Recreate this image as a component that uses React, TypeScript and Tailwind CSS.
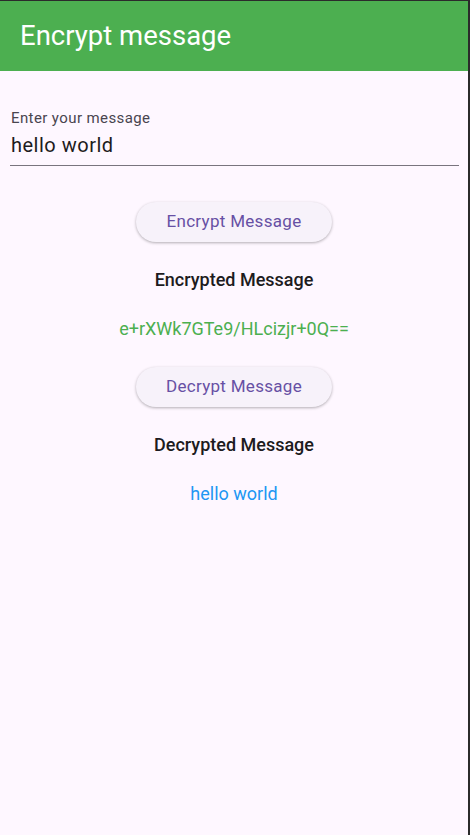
import React from "react";

export default function App() {
  return (
    <div className="w-[470px] h-[835px] bg-[#fef7ff] border-t border-r-2 border-[#2b2b2b] flex flex-col" style={{ fontFamily: "Roboto, 'Noto Sans', sans-serif" }}>
      <div className="h-[70px] bg-[#4caf50] flex items-center pl-[20px] shrink-0">
        <span className="text-white text-[27.5px] leading-none">Encrypt message</span>
      </div>
      <div className="pl-[10px] pr-[9px] pt-[38px] flex flex-col">
        <div className="flex flex-col border-b border-[#79747e] pb-[7px]">
          <span className="text-[15px] text-[#49454f] leading-[18px] tracking-[0.4px] pl-px">Enter your message</span>
          <span className="text-[20px] text-[#1d1b20] leading-[26px] mt-[5px] tracking-[0.5px] pl-px">hello world</span>
        </div>
      </div>
      <div className="flex flex-col items-center pt-[36px]">
        <button className="w-[196px] h-[40px] rounded-full bg-[#f7f2fa] text-[#6750a4] text-[17px] shadow-[0_1px_3px_rgba(0,0,0,0.3)] tracking-[0.3px]">Encrypt Message</button>
        <div className="mt-[27px] text-[18px] font-medium text-[#1d1b20] leading-[22px]">Encrypted Message</div>
        <div className="mt-[27px] text-[18px] text-[#4caf50] leading-[22px]">e+rXWk7GTe9/HLcizjr+0Q==</div>
        <div className="mt-[27px]">
          <button className="w-[196px] h-[40px] rounded-full bg-[#f7f2fa] text-[#6750a4] text-[17px] shadow-[0_1px_3px_rgba(0,0,0,0.3)] tracking-[0.3px]">Decrypt Message</button>
        </div>
        <div className="mt-[27px] text-[18px] font-medium text-[#1d1b20] leading-[22px]">Decrypted Message</div>
        <div className="mt-[27px] text-[18px] text-[#2196f3] leading-[22px]">hello world</div>
      </div>
    </div>
  );
}
